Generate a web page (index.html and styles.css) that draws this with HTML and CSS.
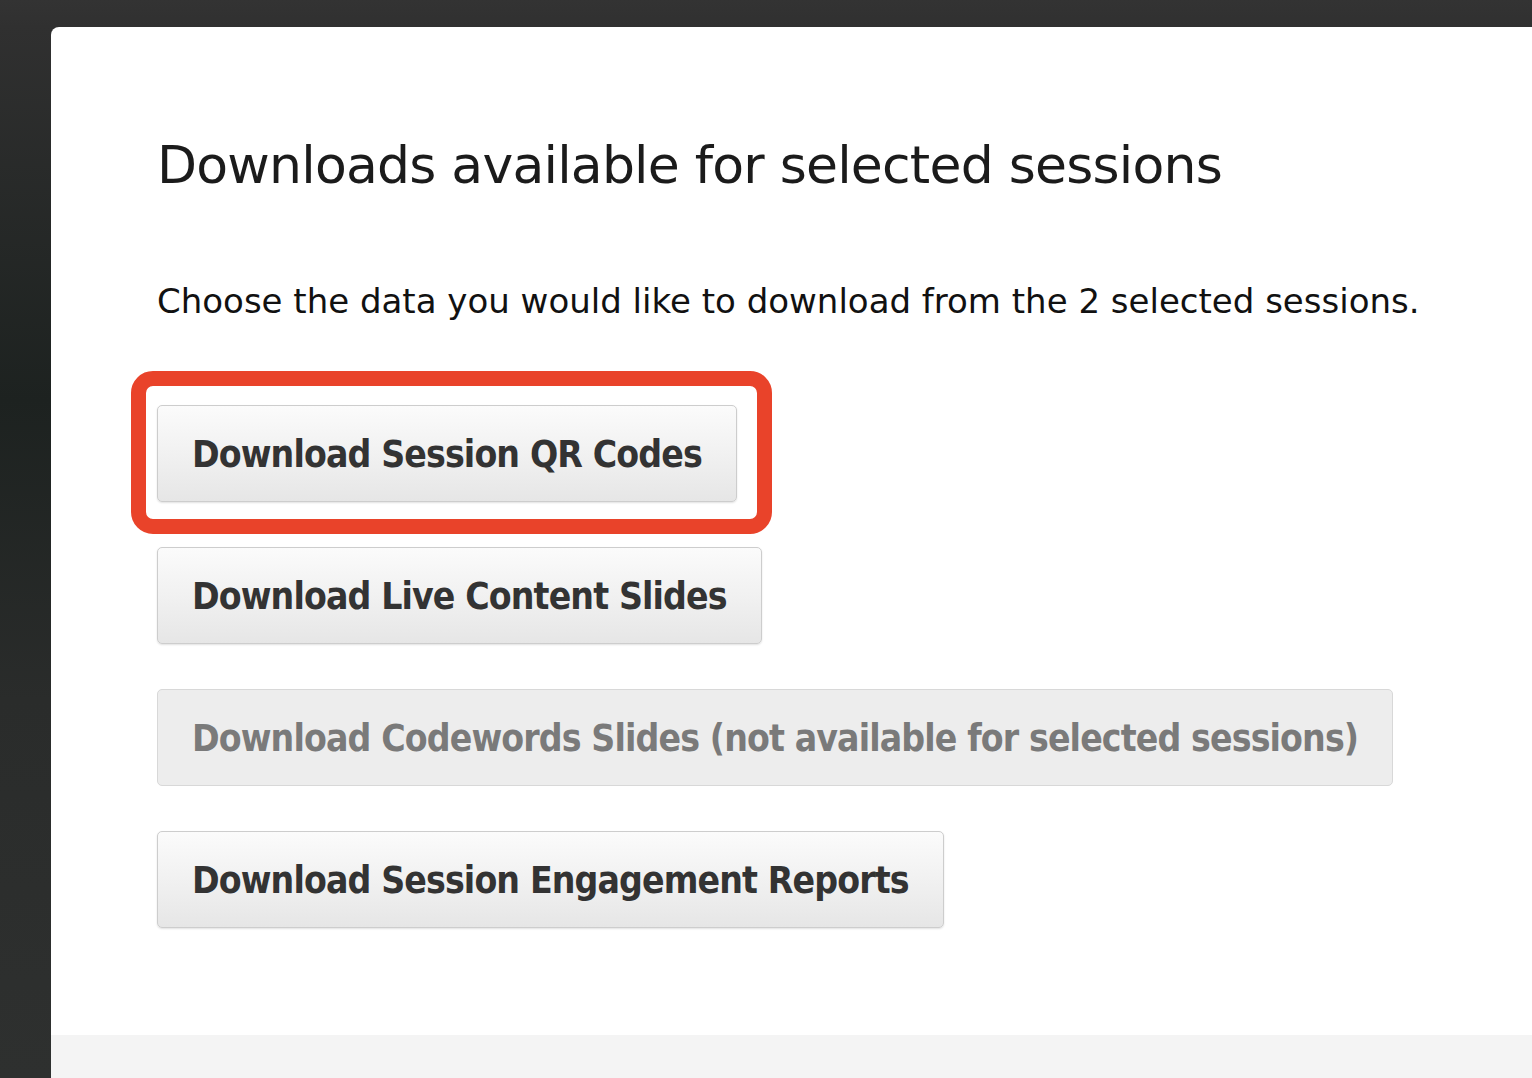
FILE: index.html
```html
<!DOCTYPE html>
<html lang="en">
<head>
<meta charset="utf-8">
<title>Downloads</title>
<link rel="stylesheet" href="styles.css">
</head>
<body>
<div class="app">
  <div class="sidebar"></div>
  <main class="card">
    <div class="content">
      <h1 class="title">Downloads available for selected sessions</h1>
      <p class="lead">Choose the data you would like to download from the 2 selected sessions.</p>
      <div class="actions">
        <div class="highlight-wrap">
          <button class="btn">Download Session QR Codes</button>
          <span class="highlight"></span>
        </div>
        <button class="btn">Download Live Content Slides</button>
        <button class="btn btn-disabled" disabled>Download Codewords Slides (not available for selected sessions)</button>
        <button class="btn">Download Session Engagement Reports</button>
      </div>
    </div>
    <div class="footer"></div>
  </main>
</div>
</body>
</html>
```

FILE: styles.css
```css
html, body {
  margin: 0;
  padding: 0;
  height: 100%;
  overflow: hidden;
}
body {
  background: #323232;
  font-family: "DejaVu Sans", "Liberation Sans", sans-serif;
}
.app {
  display: flex;
  height: 100%;
  padding-top: 27px;
  box-sizing: border-box;
  background: linear-gradient(to bottom, #333333 0px, #303030 27px, #1d2220 400px, #2a2c2b 700px, #2e302f 1078px);
}
.sidebar {
  width: 51px;
  flex: none;
}
.card {
  flex: 1;
  display: flex;
  flex-direction: column;
  background: #ffffff;
  border-top-left-radius: 8px;
  overflow: hidden;
}
.content {
  flex: 1;
  padding: 108px 0 0 106px;
}
.title {
  margin: 0;
  font-size: 52px;
  line-height: 60px;
  font-weight: normal;
  color: #1b1b1b;
  letter-spacing: -0.78px;
}
.lead {
  margin: 86px 0 0 0;
  font-size: 34px;
  line-height: 40px;
  color: #111111;
}
.actions {
  margin-top: 84px;
  display: flex;
  flex-direction: column;
  align-items: flex-start;
  gap: 45px;
}
.highlight-wrap {
  position: relative;
}
.highlight {
  position: absolute;
  left: -26px;
  top: -34px;
  width: 641px;
  height: 163px;
  box-sizing: border-box;
  border: 15px solid #e9432a;
  border-radius: 22px;
  pointer-events: none;
}
.btn {
  display: block;
  height: 97px;
  padding: 2px 34px 0 34px;
  border: 1px solid #cdcdcd;
  border-radius: 5px;
  background: linear-gradient(to bottom, #fbfbfb 0%, #f1f1f1 50%, #e6e6e6 100%);
  box-shadow: 0 1px 2px rgba(0, 0, 0, 0.12);
  font-family: "DejaVu Sans Condensed", "DejaVu Sans", "Liberation Sans", sans-serif;
  font-stretch: semi-condensed;
  font-size: 37px;
  font-weight: bold;
  letter-spacing: -0.88px;
  color: #333333;
  text-align: left;
  white-space: nowrap;
  cursor: pointer;
}
.btn-disabled {
  background: #ededed;
  border-color: #d8d8d8;
  box-shadow: none;
  color: #7a7a7a;
  cursor: default;
}
.footer {
  height: 43px;
  background: #f4f4f4;
  flex: none;
}
```
